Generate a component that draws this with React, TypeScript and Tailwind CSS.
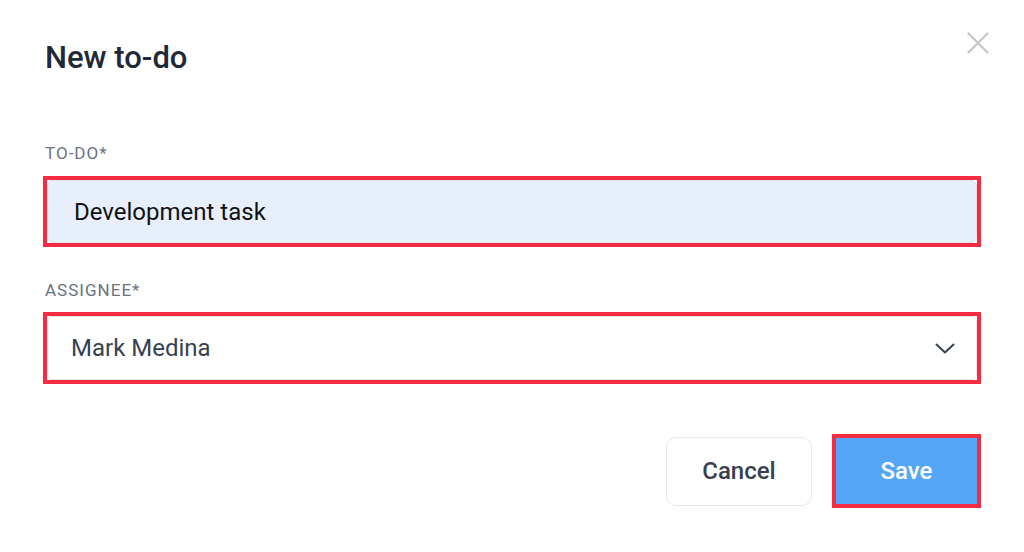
import React from 'react'

// Annotated "New to-do" modal (red boxes are highlight marks from the original capture)

function CloseIcon() {
  return (
    <svg width="22" height="22" viewBox="0 0 22 22" fill="none">
      <path d="M1.5 1.5 L20.5 20.5 M20.5 1.5 L1.5 20.5" stroke="#c6c6c6" strokeWidth="2.2" strokeLinecap="round" />
    </svg>
  )
}

function Chevron() {
  return (
    <svg width="20" height="11" viewBox="0 0 20 11" fill="none">
      <path d="M1.5 1.5 L10 9.5 L18.5 1.5" stroke="#374151" strokeWidth="2" strokeLinecap="round" strokeLinejoin="round" />
    </svg>
  )
}

export default function App() {
  return (
    <div className="w-[1024px] h-[552px] bg-white font-['Roboto','Liberation_Sans',sans-serif] overflow-hidden">
      <div className="px-[43px]">
        <div className="flex items-start justify-between">
          <h1 className="mt-[40px] ml-[2px] text-[31px] leading-[36px] font-medium text-[#1f2937]">New to-do</h1>
          <button className="mt-[32px] -mr-[8px]">
            <CloseIcon />
          </button>
        </div>

        <label className="block mt-[67px] ml-[2px] text-[17px] leading-[20px] tracking-[0.06em] text-[#6b7280]">TO-DO*</label>
        <div className="mt-[13px] h-[71px] border-4 border-[#f42c43]">
          <div className="h-full rounded-[6px] border border-[#dfe3ea] bg-[#e8effc] flex items-center pl-[26px] text-[24px] text-[#111111]">
            Development task
          </div>
        </div>

        <label className="block mt-[33px] ml-[2px] text-[17px] leading-[20px] tracking-[0.06em] text-[#6b7280]">ASSIGNEE*</label>
        <div className="mt-[12px] h-[72px] border-4 border-[#f42c43]">
          <div className="h-full rounded-[6px] border border-[#e5e7eb] bg-white flex items-center justify-between pl-[23px] pr-[21px] text-[24px] text-[#374151]">
            <span>Mark Medina</span>
            <Chevron />
          </div>
        </div>

        <div className="mt-[50px] flex justify-end items-center gap-[20px]">
          <button className="w-[146px] h-[69px] rounded-[10px] border-[1.5px] border-[#e5e7eb] bg-white text-[24px] font-medium text-[#374151]">
            Cancel
          </button>
          <div className="w-[149px] h-[74px] border-4 border-[#f42c43]">
            <button className="w-full h-full bg-[#55a6f6] text-[24px] font-medium text-white">
              Save
            </button>
          </div>
        </div>
      </div>
    </div>
  )
}
